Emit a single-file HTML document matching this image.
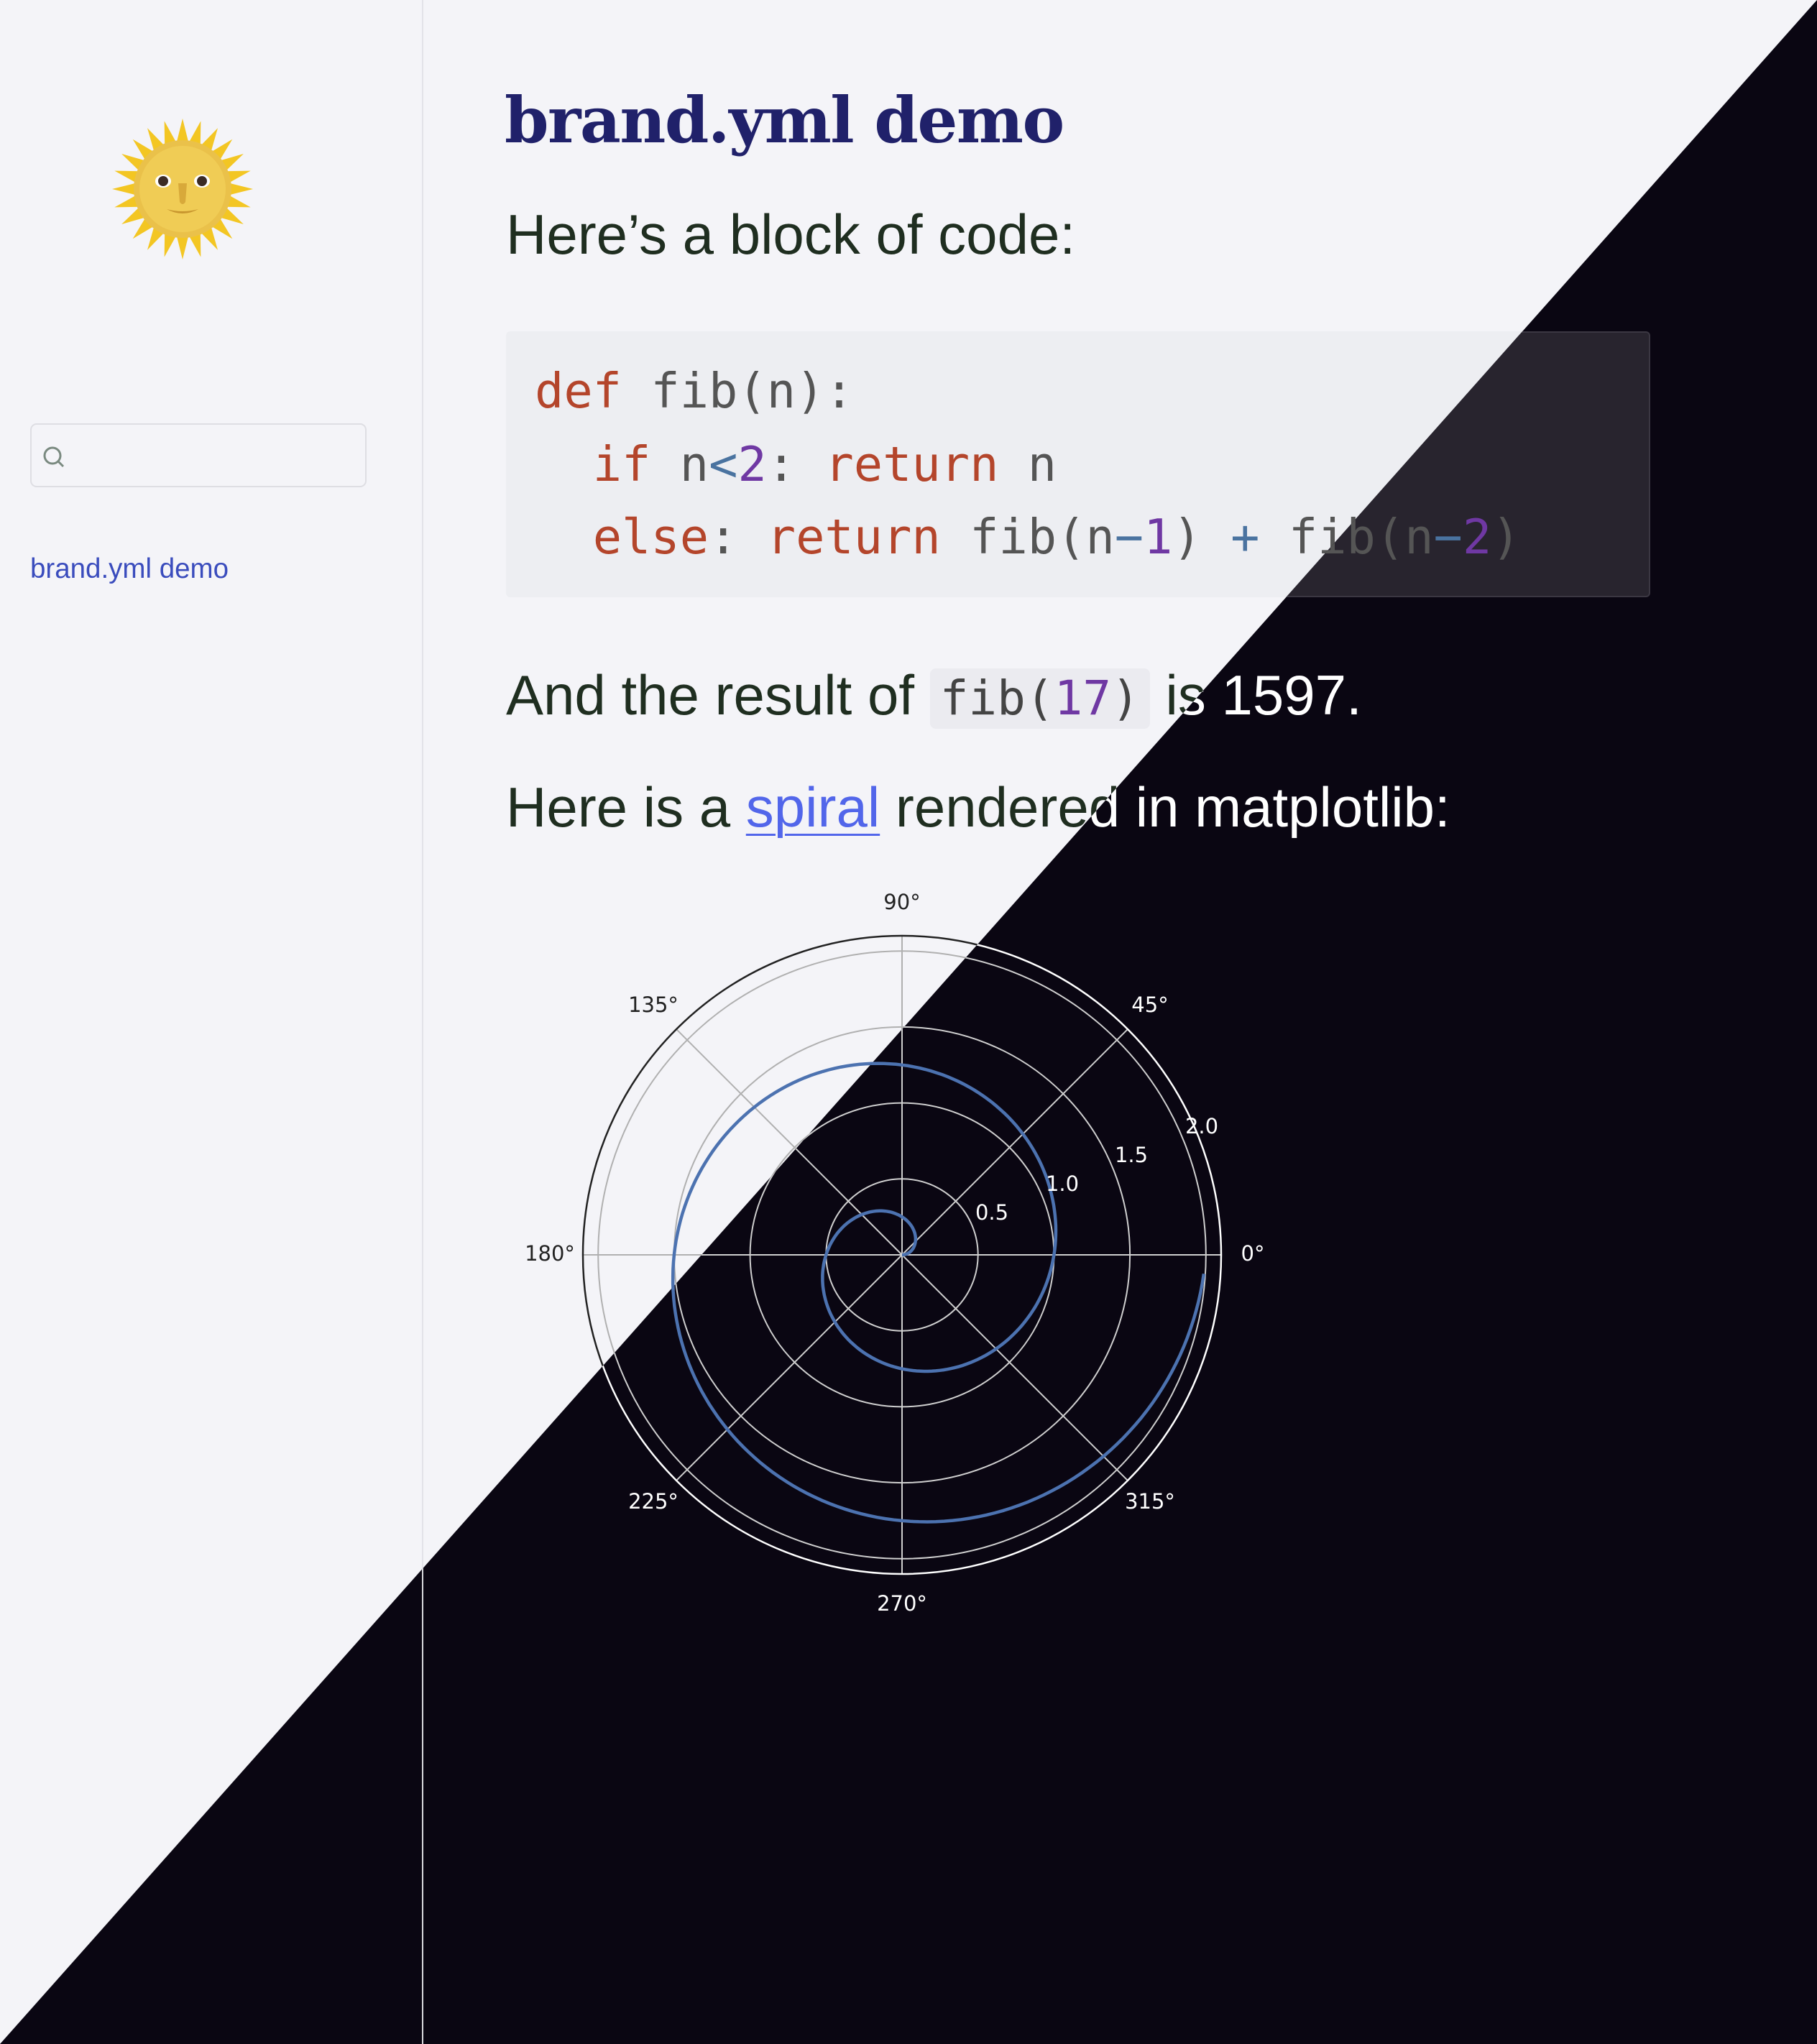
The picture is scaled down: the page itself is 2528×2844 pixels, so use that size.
<!DOCTYPE html>
<html><head><meta charset="utf-8">
<style>
html,body{margin:0;padding:0}
body{width:2528px;height:2844px;position:relative;overflow:hidden;font-family:"Liberation Sans",sans-serif}
.layer{position:absolute;left:0;top:0;width:2528px;height:2844px;background:#f4f4f8}
.dark{background:#0a0612;clip-path:polygon(100% 0,100% 100%,0 100%)}
.sb{position:absolute;left:587px;top:0;width:2px;height:2844px;background:#e2e2e8}
.dark .sb{background:#d8d8dc;width:1.5px}
.abs{position:absolute;white-space:pre}
.title{left:702px;top:115px;font-family:"DejaVu Serif","Liberation Serif",serif;font-weight:bold;font-size:88px;color:#20216a;letter-spacing:-1.5px}
.p{font-size:78px;color:#1f2e20;letter-spacing:0}
.dark .p{color:#fff}
.code{position:absolute;left:704px;top:461px;width:1592px;height:370px;background:#edeef2;border-radius:6px;box-sizing:border-box}
.dark .code{background:#28242e;border:2px solid #3b3742}
.mono{font-family:"DejaVu Sans Mono","Liberation Mono",monospace;font-size:67px;color:#555}
.k{color:#b4452b}.nm{color:#6f38a3}.op{color:#4a73a0}
.ic{display:inline-block;background:#ebebf0;border-radius:8px;padding:0 14px;line-height:84px;font-size:66px;color:#444}
.dark .ic{background:#1c1822}
.lnk{color:#5266ea;text-decoration:underline;text-decoration-thickness:3px;text-underline-offset:10px}
.search{position:absolute;left:42px;top:589px;width:468px;height:89px;border:2px solid #dedee3;border-radius:9px;box-sizing:border-box}
.side{left:42px;top:770px;font-size:38.5px;color:#3a4cbd}
svg text{font-family:"DejaVu Sans",sans-serif;font-size:29px}
</style></head><body>
<div class="layer" id="L"></div>
<div class="layer dark" id="D"></div>
<template id="T">
<div class="sb"></div>
<svg class="abs" style="left:154px;top:163px" width="200" height="200" viewBox="-100 -100 200 200">
<g fill="#f3c623" id="rays"></g>
<circle r="68" fill="#eac14a"/>
<circle r="60" fill="#f0cc55"/>
<ellipse cx="-27" cy="-11" rx="11" ry="9" fill="#fff"/><ellipse cx="27" cy="-11" rx="11" ry="9" fill="#fff"/>
<circle cx="-27" cy="-11" r="7" fill="#3b2b25"/><circle cx="27" cy="-11" r="7" fill="#3b2b25"/>
<path d="M-6 -8 L-4 18 Q0 24 4 18 L6 -8" fill="#d8a93a"/>
<path d="M-22 28 Q0 40 22 28 Q0 34 -22 28" fill="#c8962e"/>
</svg>
<div class="search"><svg style="position:absolute;left:14px;top:28px" width="36" height="36" viewBox="0 0 36 36"><circle cx="15" cy="15" r="11" fill="none" stroke="#7a8a80" stroke-width="3"/><line x1="23" y1="23" x2="30" y2="30" stroke="#7a8a80" stroke-width="3"/></svg></div>
<div class="abs side">brand.yml demo</div>
<div class="abs title">brand.yml demo</div>
<div class="abs p" style="left:704px;top:281px">Here’s a block of code:</div>
<div class="code"></div>
<div class="abs mono" style="left:744px;top:505px"><span class="k">def</span> fib(n):</div>
<div class="abs mono" style="left:744px;top:607px">  <span class="k">if</span> n<span class="op">&lt;</span><span class="nm">2</span>: <span class="k">return</span> n</div>
<div class="abs mono" style="left:744px;top:708px">  <span class="k">else</span>: <span class="k">return</span> fib(n<span class="op">−</span><span class="nm">1</span>) <span class="op">+</span> fib(n<span class="op">−</span><span class="nm">2</span>)</div>
<div class="abs p" style="left:704px;top:922px">And the result of <span class="mono ic">fib(<span class="nm">17</span>)</span> is 1597.</div>
<div class="abs p" style="left:704px;top:1078px">Here is a <span class="lnk">spiral</span> rendered in matplotlib:</div>
<svg class="abs plot" style="left:0;top:0" width="2528" height="2844"></svg>
</template>
<script>
function build(el,dark){
  el.appendChild(document.getElementById('T').content.cloneNode(true));
  var rays=el.querySelector('#rays'),s='';
  for(var i=0;i<24;i++){var a=i*15;s+='<polygon points="-9,-62 0,-98 9,-62" transform="rotate('+a+')"/>';}
  rays.innerHTML=s;
  var cx=1255,cy=1746,u=211.4,R=444,g=dark?'#cfcfcf':'#b0b0b0',fg=dark?'#ffffff':'#222222',h='';
  for(var k=1;k<=4;k++)h+='<circle cx="'+cx+'" cy="'+cy+'" r="'+(k*0.5*u)+'" fill="none" stroke="'+g+'" stroke-width="2"/>';
  for(var k=0;k<8;k++){var a=k*Math.PI/4;h+='<line x1="'+cx+'" y1="'+cy+'" x2="'+(cx+R*Math.cos(a))+'" y2="'+(cy-R*Math.sin(a))+'" stroke="'+g+'" stroke-width="2"/>';}
  h+='<circle cx="'+cx+'" cy="'+cy+'" r="'+R+'" fill="none" stroke="'+fg+'" stroke-width="2.5"/>';
  var p='';for(var r=0;r<=1.99;r+=0.005){var t=2*Math.PI*r;p+=(p?'L':'M')+(cx+r*u*Math.cos(t)).toFixed(1)+' '+(cy-r*u*Math.sin(t)).toFixed(1);}
  h+='<path d="'+p+'" fill="none" stroke="#4c72b0" stroke-width="4.5"/>';
  var L=[['90°',1255,1265],['45°',1600,1408],['135°',909,1408],['180°',765,1754],['0°',1743,1754],['225°',909,2099],['270°',1255,2241],['315°',1600,2099],['0.5',1380,1697],['1.0',1478,1657],['1.5',1574,1617],['2.0',1672,1577]];
  L.forEach(function(l){h+='<text x="'+l[1]+'" y="'+l[2]+'" fill="'+fg+'" text-anchor="middle">'+l[0]+'</text>';});
  el.querySelector('.plot').innerHTML=h;
}
build(document.getElementById('L'),false);
build(document.getElementById('D'),true);
</script>
</body></html>
